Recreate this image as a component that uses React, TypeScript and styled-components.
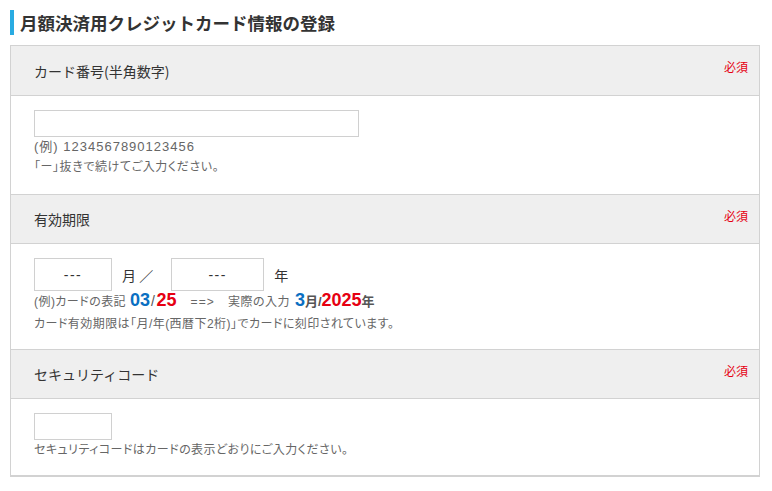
import React from "react";
import styled, { createGlobalStyle } from "styled-components";

const GlobalStyle = createGlobalStyle`
  html, body {
    margin: 0;
    padding: 0;
    background: #fff;
  }
  body {
    font-family: "Noto Sans CJK JP", "Noto Sans", sans-serif;
    color: #333;
  }
  * {
    box-sizing: border-box;
  }
`;

const latin = `"Liberation Sans", "Noto Sans CJK JP", sans-serif`;

const Page = styled.div`
  width: 772px;
  padding: 10px 12px 0 10px;
`;

const Title = styled.h2`
  margin: 0 0 10px;
  padding-left: 6px;
  border-left: 4px solid #29abe2;
  font-size: 17.5px;
  font-weight: 700;
  line-height: 25px;
  color: #333;
`;

const Table = styled.div`
  border: 1px solid #d2d2d2;
  border-bottom-width: 2px;
`;

const Head = styled.div<{ first?: boolean }>`
  display: flex;
  justify-content: space-between;
  align-items: center;
  height: 50px;
  padding: 0 11px 0 23px;
  background: #efefef;
  border-top: ${(p) => (p.first ? "none" : "1px solid #d2d2d2")};
  border-bottom: 1px solid #d2d2d2;
  font-size: 14px;
  color: #333;
`;

const Required = styled.span`
  align-self: flex-start;
  margin-top: 12px;
  font-size: 12px;
  color: #e60012;
`;

const Body = styled.div<{ pb: number }>`
  padding: 14px 23px ${(p) => p.pb}px;
`;

const TextInput = styled.div<{ w: number; h: number }>`
  width: ${(p) => p.w}px;
  height: ${(p) => p.h}px;
  border: 1px solid #d0d0d0;
  background: #fff;
  display: flex;
  align-items: center;
  justify-content: center;
  font-family: ${latin};
  font-size: 14px;
  color: #333;
  letter-spacing: 1.5px;
`;

const Row = styled.div`
  display: flex;
  align-items: center;
`;

const Unit = styled.span<{ ml: number; mr: number }>`
  margin-left: ${(p) => p.ml}px;
  margin-right: ${(p) => p.mr}px;
  font-size: 14px;
  color: #333;
`;

const Note = styled.p<{ size?: number; mt?: number; ls?: number }>`
  margin: ${(p) => p.mt ?? 0}px 0 0;
  height: 20px;
  font-family: ${latin};
  font-size: ${(p) => p.size ?? 12}px;
  line-height: 20px;
  color: #666;
  white-space: nowrap;
  font-feature-settings: "palt";
  letter-spacing: ${(p) => p.ls ?? 0.45}px;
`;

const Big = styled.span<{ tone: "blue" | "red" }>`
  font-size: 18px;
  font-weight: 700;
  line-height: 1;
  color: ${(p) => (p.tone === "blue" ? "#0a6fc2" : "#e60012")};
  letter-spacing: 0;
`;

const Strong = styled.span`
  font-size: 13px;
  font-weight: 700;
  line-height: 1;
  color: #555;
  letter-spacing: 0;
`;

const Slash = styled.span`
  margin: 0 1px;
  font-size: 14px;
  line-height: 1;
  color: #555;
`;

const Arrow = styled.span`
  margin: 0 13px 0 14px;
  letter-spacing: 1.2px;
`;

const Gap = styled.span<{ w: number }>`
  display: inline-block;
  width: ${(p) => p.w}px;
`;

const App: React.FC = () => {
  return (
    <Page>
      <GlobalStyle />
      <Title>月額決済用クレジットカード情報の登録</Title>
      <Table>
        <Head first>
          <span>カード番号(半角数字)</span>
          <Required>必須</Required>
        </Head>
        <Body pb={17}>
          <TextInput w={325} h={27} />
          <Note size={13} ls={1}>(例) 1234567890123456</Note>
          <Note ls={0.6}>「ー」抜きで続けてご入力ください。</Note>
        </Body>

        <Head>
          <span>有効期限</span>
          <Required>必須</Required>
        </Head>
        <Body pb={15}>
          <Row>
            <TextInput w={78} h={33}>---</TextInput>
            <Unit ml={10} mr={18}>月 ／</Unit>
            <TextInput w={93} h={33}>---</TextInput>
            <Unit ml={10} mr={0}>年</Unit>
          </Row>
          <Note>
            (例)カードの表記<Gap w={4} />
            <Big tone="blue">03</Big>
            <Slash>/</Slash>
            <Big tone="red">25</Big>
            <Arrow>==&gt;</Arrow>実際の入力<Gap w={5} />
            <Big tone="blue">3</Big>
            <Strong>月/</Strong>
            <Big tone="red">2025</Big>
            <Strong>年</Strong>
          </Note>
          <Note mt={3}>カード有効期限は「月/年(西暦下2桁)」でカードに刻印されています。</Note>
        </Body>

        <Head>
          <span>セキュリティコード</span>
          <Required>必須</Required>
        </Head>
        <Body pb={15}>
          <TextInput w={78} h={27} />
          <Note>セキュリティコードはカードの表示どおりにご入力ください。</Note>
        </Body>
      </Table>
    </Page>
  );
};

export default App;
